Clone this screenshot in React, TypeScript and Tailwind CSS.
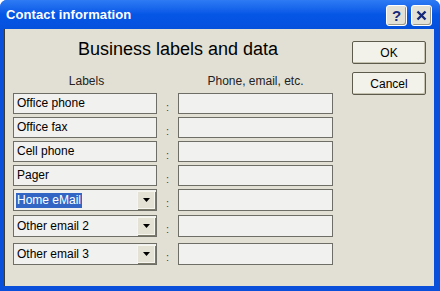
import { ReactNode } from "react";

type FieldRow = {
	label: string;
	combo?: boolean;
	selected?: boolean;
	mt: string;
	h: string;
};

const rows: FieldRow[] = [
	{ label: "Office phone", mt: "mt-0", h: "h-[21px]" },
	{ label: "Office fax", mt: "mt-[3px]", h: "h-[21px]" },
	{ label: "Cell phone", mt: "mt-[3px]", h: "h-[21px]" },
	{ label: "Pager", mt: "mt-[3px]", h: "h-[21px]" },
	{ label: "Home eMail", combo: true, selected: true, mt: "mt-[3px]", h: "h-[22px]" },
	{ label: "Other email 2", combo: true, mt: "mt-[4px]", h: "h-[22px]" },
	{ label: "Other email 3", combo: true, mt: "mt-[6px]", h: "h-[22px]" },
];

const TitleButton = ({ children }: { children: ReactNode }) => (
	<div className="w-[21px] h-[21px] rounded-[3px] border border-white bg-[#e3e1d6] flex items-center justify-center shadow-[inset_-1px_-1px_0_#9a9888]">
		{children}
	</div>
);

const DialogButton = ({ title }: { title: string }) => (
	<div className="w-[74px] h-[23px] border border-[#5c5b4c] rounded-[2px] bg-[#f2f1ea] flex items-center justify-center text-[12px] text-black shadow-[inset_-1px_-1px_0_#c4c1ae]">
		{title}
	</div>
);

const ComboArrow = () => (
	<div className="w-[18px] h-[18px] mr-[1px] bg-[#e4e2d5] border border-[#f6f5ee] shadow-[1px_1px_0_#7d7b6c] flex items-center justify-center">
		<svg width="7" height="4" viewBox="0 0 7 4">
			<path d="M0 0h7L3.5 4z" fill="#000" />
		</svg>
	</div>
);

const Row = ({ label, combo, selected, mt, h }: FieldRow) => (
	<div className={`${mt} flex items-center`}>
		<div
			className={`${h} w-[144px] border border-[#6e6d66] bg-[#f1f1ef] flex items-center justify-between pl-[2px]`}
		>
			<span
				className={`text-[12px] leading-[15px] px-[1px] ${
					selected ? "bg-[#3365c4] text-white" : "text-black"
				}`}
			>
				{label}
			</span>
			{combo && <ComboArrow />}
		</div>
		<div className="w-[21px] text-center text-[11px] text-[#444] leading-none pt-[7px]">:</div>
		<div className={`${h} w-[155px] border border-[#6e6d66] bg-[#f1f1ef]`} />
	</div>
);

export default function App() {
	return (
		<div
			className="w-[440px] h-[291px] bg-[#0a4fd9] rounded-t-[7px] flex flex-col overflow-hidden"
			style={{ fontFamily: '"Liberation Sans", Arial, sans-serif' }}
		>
			<div className="h-[29px] shrink-0 bg-gradient-to-b from-[#2e7bf4] via-[#0656e6] to-[#0451dc] flex items-center justify-between pl-[6px] pr-[8px]">
				<span className="text-white font-bold text-[13px] tracking-[0.1px]">Contact information</span>
				<div className="flex gap-[4px] mt-[1px]">
					<TitleButton>
						<span className="text-[#15287a] font-bold text-[15px] leading-none">?</span>
					</TitleButton>
					<TitleButton>
						<svg width="11" height="11" viewBox="0 0 11 11">
							<path d="M1.5 1.5l8 8M9.5 1.5l-8 8" stroke="#15287a" strokeWidth="2.4" />
						</svg>
					</TitleButton>
				</div>
			</div>
			<div className="flex-1 ml-[4px] mr-[6px] mb-[5px] bg-[#e2e0d4] border-l border-[#3b3a33] flex">
				<div className="pl-[8px] w-[338px] flex flex-col">
					<div className="pt-[9px] h-[38px] text-center text-[18px] leading-[22px] text-black">
						Business labels and data
					</div>
					<div className="flex text-[12px] text-[#222] mt-[5px] h-[21px]">
						<div className="w-[144px] text-center pl-[3px]">Labels</div>
						<div className="w-[21px]" />
						<div className="w-[155px] text-center">Phone, email, etc.</div>
					</div>
					<div className="flex flex-col">
						{rows.map((r) => (
							<Row key={r.label} {...r} />
						))}
					</div>
				</div>
				<div className="pl-[9px] pt-[12px] flex flex-col gap-[8px]">
					<DialogButton title="OK" />
					<DialogButton title="Cancel" />
				</div>
			</div>
		</div>
	);
}
